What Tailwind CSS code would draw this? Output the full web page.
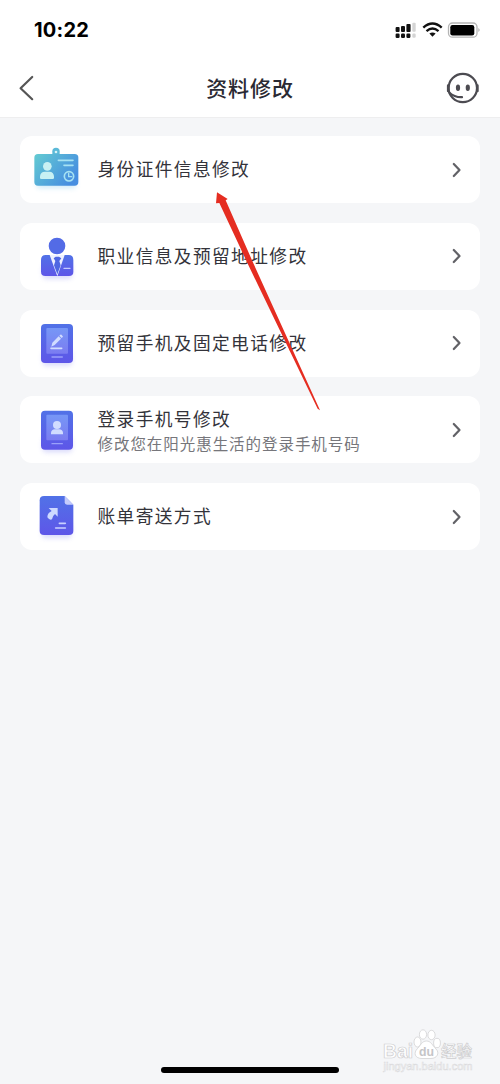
<!DOCTYPE html>
<html lang="zh-CN">
<head>
<meta charset="utf-8">
<title>资料修改</title>
<script src="https://cdn.jsdelivr.net/npm/@tailwindcss/browser@4"></script>
</head>
<body class="font-['Noto_Sans_CJK_SC',sans-serif]">
<div class="relative flex h-[1084px] w-[500px] flex-col overflow-hidden bg-[#f5f6f8]">
  <header class="flex h-[118px] flex-col border-b border-[#eeeeef] bg-white">
    <div class="flex h-[60px] items-center justify-between pl-[34px] pr-[19px]">
      <span class="font-['Inter',sans-serif] text-[20px] leading-none font-bold tracking-[0.2px] text-black">10:22</span>
      <svg class="h-[20px] w-[86px]" viewBox="0 0 86 20">
        <g fill="#111"><rect x=".6" y="7" width="4" height="5" rx="1"/><rect x="6" y="6" width="4" height="6" rx="1"/><rect x="11.400" y="4" width="4.200" height="8" rx="1"/><rect x=".6" y="13.600" width="4" height="4.400" rx="1.200"/><rect x="6" y="13.600" width="4" height="4.400" rx="1.200"/><rect x="11.400" y="13.600" width="4" height="4.400" rx="1.200"/></g>
        <g fill="#d4d4d4"><rect x="17.300" y="2.800" width="3.400" height="9" rx="1"/><rect x="17.300" y="13.600" width="3.400" height="4.200" rx="1.200"/></g>
        <g fill="none" stroke="#111" stroke-width="2.400"><path d="M28.300 7.600Q37.500 -.6 46.700 7.600"/><path d="M31.500 11.100Q37.500 6 43.500 11.100"/></g>
        <path d="M34.400 13.600Q37.500 11.400 40.600 13.600L37.500 16.700Z" fill="#111"/>
        <rect x="53.500" y="3" width="28.500" height="14.200" rx="4" fill="#fff" stroke="#b5b5b5" stroke-width="1.300"/>
        <rect x="55.300" y="5" width="24" height="10.400" rx="2.200" fill="#000"/>
        <path d="M83.500 8Q85.500 10 83.500 12Z" fill="#999"/>
      </svg>
    </div>
    <div class="flex h-[56px] items-center justify-between pr-[20px] pl-[18px]">
      <svg class="h-[28px] w-[35px]" viewBox="0 0 35 28" fill="none" stroke="#555" stroke-width="2.200" stroke-linecap="round" stroke-linejoin="round"><path d="M14.200 3L2.600 14.200L14.200 25.200"/></svg>
      <h1 class="mb-[2px] ml-[2px] text-[21px] leading-none font-medium tracking-[0.900px] text-[#2a2a33]">资料修改</h1>
      <svg class="h-[34px] w-[35px]" viewBox="0 0 35 34" fill="none" stroke="#4c4b51" stroke-width="2.200" stroke-linecap="round">
        <circle cx="17.800" cy="17" r="14.200"/><path d="M3.200 14.500V20M32.400 14.500V20" stroke-width="2.600"/><path d="M4.200 21.500Q9.500 26.500 17 26.200"/>
        <g fill="#4c4b51" stroke="none"><ellipse cx="13" cy="16.800" rx="2.100" ry="3.200"/><ellipse cx="22.800" cy="16.800" rx="2.100" ry="3.200"/></g>
      </svg>
    </div>
  </header>

  <svg class="absolute h-0 w-0">
    <defs>
      <linearGradient id="teal" x1="0" y1="0" x2="1" y2=".6"><stop stop-color="#63cbd2"/><stop offset="1" stop-color="#478ee0"/></linearGradient>
      <linearGradient id="violet" x1="0" y1="0" x2="0" y2="1"><stop stop-color="#5172e7"/><stop offset="1" stop-color="#5e56e8"/></linearGradient>
      <linearGradient id="screen" x1="0" y1="0" x2="0" y2="1"><stop stop-color="#7697f6"/><stop offset="1" stop-color="#7b7cf1"/></linearGradient>
      <filter id="soft" x="-50%" y="-50%" width="200%" height="200%"><feGaussianBlur stdDeviation="8"/></filter>
    </defs>
  </svg>

  <main class="flex flex-col gap-[19.800px] px-[20px] pt-[18px]">
    <section class="flex h-[67px] items-center rounded-[12px] bg-white pr-[17.500px]">
      <svg class="h-[67px] w-[77.500px] shrink-0" viewBox="0 18 232.500 201">
        <g transform="translate(-20 0) translate(20 0)">
        <rect x="50" y="130" width="118" height="45" rx="10" fill="#6bbfe8" opacity=".3" filter="url(#soft)"/>
        <path d="M108 53a11 11 0 0 1 11 11V78H97V64a11 11 0 0 1 11-11Z" fill="#5bb9d8"/>
        <rect x="43" y="72" width="132" height="95" rx="11" fill="url(#teal)"/>
        <circle cx="108" cy="66" r="4" fill="#d8f2f7"/>
        <circle cx="82" cy="109" r="13" fill="#c8f1f3"/><path d="M60 144V139Q61 125 75 125H88Q101 125 102 139V144Q102 147 98 147H64Q60 147 60 144Z" fill="#c8f1f3"/>
        <g stroke="#a6e2f3" stroke-width="5" fill="none" stroke-linecap="round"><path d="M115 91H159M132 106H159"/><circle cx="147" cy="139" r="14"/><path d="M146 130V140H155" stroke-width="4"/></g>
        </g>
      </svg>
      <span class="mb-[1px] flex-1 text-[17.700px] leading-none tracking-[1.400px] text-[#33333a]">身份证件信息修改</span>
      <svg class="h-[18px] w-[12px]" viewBox="0 0 12 18" fill="none" stroke="#626267" stroke-width="2.200" stroke-linecap="round" stroke-linejoin="round"><path d="M2.800 3L8.500 9L2.800 15"/></svg>
    </section>

    <section class="flex h-[67px] items-center rounded-[12px] bg-white pr-[17.500px]">
      <svg class="h-[67px] w-[77.500px] shrink-0" viewBox="0 18 232.500 201">
        <rect x="68" y="140" width="88" height="45" rx="10" fill="#7a7cf0" opacity=".28" filter="url(#soft)"/>
        <circle cx="111" cy="87" r="25" fill="#536be6"/>
        <path d="M77 114H146Q160 114 160 129V164Q160 177 147 177H76Q63 177 63 164V129Q63 114 77 114Z" fill="url(#violet)"/>
        <path d="M89 114H134L112 178Z" fill="#eef1ff"/><path d="M101 124L107 119H117L124 124L118 132L122 145L112 172L102 145L106 132Z" fill="#4f67e2"/>
        <path d="M132 154H150" stroke="#c4cbff" stroke-width="4" stroke-linecap="round"/>
      </svg>
      <span class="mb-[1px] flex-1 text-[17.700px] leading-none tracking-[1.400px] text-[#33333a]">职业信息及预留地址修改</span>
      <svg class="h-[18px] w-[12px]" viewBox="0 0 12 18" fill="none" stroke="#626267" stroke-width="2.200" stroke-linecap="round" stroke-linejoin="round"><path d="M2.800 3L8.500 9L2.800 15"/></svg>
    </section>

    <section class="flex h-[67px] items-center rounded-[12px] bg-white pr-[17.500px]">
      <svg class="h-[67px] w-[77.500px] shrink-0" viewBox="0 18 232.500 201">
        <rect x="68" y="140" width="88" height="45" rx="10" fill="#7a7cf0" opacity=".28" filter="url(#soft)"/>
        <rect x="63" y="60" width="96" height="117" rx="12" fill="url(#violet)"/><rect x="79" y="72" width="65" height="77" rx="3" fill="url(#screen)"/>
        <path d="M93 133H125" stroke="#d1dcff" stroke-width="5" stroke-linecap="round"/><path d="M94 128L97 116L116 97L123 104L104 123ZM118 95L121 92Q124 91 127 95L129 98L125 102Z" fill="#d1dcff"/>
        <path d="M96 159H127" stroke="#9aa0fa" stroke-width="4" stroke-linecap="round"/>
      </svg>
      <span class="flex-1 text-[17.700px] leading-none tracking-[1.400px] text-[#33333a]">预留手机及固定电话修改</span>
      <svg class="h-[18px] w-[12px]" viewBox="0 0 12 18" fill="none" stroke="#626267" stroke-width="2.200" stroke-linecap="round" stroke-linejoin="round"><path d="M2.800 3L8.500 9L2.800 15"/></svg>
    </section>

    <section class="flex h-[67px] items-center rounded-[12px] bg-white pr-[17.500px]">
      <svg class="h-[67px] w-[77.500px] shrink-0" viewBox="0 19 232.500 201">
        <rect x="68" y="143" width="88" height="45" rx="10" fill="#7a7cf0" opacity=".28" filter="url(#soft)"/>
        <rect x="63" y="63" width="96" height="117" rx="12" fill="url(#violet)"/><rect x="79" y="75" width="65" height="77" rx="3" fill="url(#screen)"/>
        <circle cx="111" cy="106" r="12" fill="#d1dcff"/><path d="M93 134V130Q94 119 105 119H117Q128 119 129 130V134Z" fill="#d1dcff"/>
        <path d="M96 162H127" stroke="#9aa0fa" stroke-width="4" stroke-linecap="round"/>
      </svg>
      <div class="flex flex-1 flex-col gap-[8px] pt-[2px]">
        <span class="text-[17.700px] leading-none tracking-[1.400px] text-[#33333a]">登录手机号修改</span>
        <span class="text-[15.500px] leading-none tracking-[0.950px] text-[#76767b]">修改您在阳光惠生活的登录手机号码</span>
      </div>
      <svg class="h-[18px] w-[12px]" viewBox="0 0 12 18" fill="none" stroke="#626267" stroke-width="2.200" stroke-linecap="round" stroke-linejoin="round"><path d="M2.800 3L8.500 9L2.800 15"/></svg>
    </section>

    <section class="flex h-[67px] items-center rounded-[12px] bg-white pr-[17.500px]">
      <svg class="h-[67px] w-[77.500px] shrink-0" viewBox="0 18 232.500 201">
        <rect x="66" y="138" width="88" height="45" rx="10" fill="#7a7cf0" opacity=".28" filter="url(#soft)"/>
        <path d="M72 57H134L160 83V161Q160 174 147 174H72Q59 174 59 161V70Q59 57 72 57Z" fill="url(#violet)"/>
        <path d="M134 57L160 83H141Q134 83 134 76Z" fill="#c5ccfc"/>
        <path d="M86 93H113V119L105 111Q96 118 96 127Q89 131 82 121Q82 108 95 102Z" fill="#cdd9ff"/>
        <path d="M118 139H136M107 153H136" stroke="#c9d1ff" stroke-width="5" stroke-linecap="round"/>
      </svg>
      <span class="mb-[1px] flex-1 text-[17.700px] leading-none tracking-[1.400px] text-[#33333a]">账单寄送方式</span>
      <svg class="h-[18px] w-[12px]" viewBox="0 0 12 18" fill="none" stroke="#626267" stroke-width="2.200" stroke-linecap="round" stroke-linejoin="round"><path d="M2.800 3L8.500 9L2.800 15"/></svg>
    </section>
  </main>

  <svg class="absolute top-[180px] left-[200px] h-[240px] w-[140px]" viewBox="0 0 420 720"><path d="M51 37L83 57L77 61L157 243L360 691L353 686L145 255L58 69L48 70Z" fill="#e52d21"/></svg>

  <svg class="absolute top-[1020px] left-[370px] h-[64px] w-[130px]" viewBox="0 0 130 64">
    <g fill="#fff" stroke="#cdcdcf" stroke-width=".7">
      <text x="13" y="38" font-family="Liberation Sans" font-weight="700" font-size="20" textLength="30" lengthAdjust="spacingAndGlyphs">Bai</text>
      <ellipse cx="47.500" cy="22" rx="3.500" ry="5"/><ellipse cx="53" cy="14.500" rx="3.600" ry="4.700"/><ellipse cx="61.500" cy="15" rx="3.600" ry="4.700"/><ellipse cx="67" cy="23" rx="3.400" ry="4.700"/>
      <path d="M56.500 21C61 21 62 25 66 29C70 33 67 38.500 61 38.500H52C45 38.500 43 33 47.500 28.500C51 25 52 21 56.500 21Z"/>
      <text x="71" y="36.500" font-family="Noto Sans CJK SC" font-weight="500" font-size="15.500" textLength="31" lengthAdjust="spacingAndGlyphs">经验</text>
    </g>
    <text x="49" y="36" font-family="Liberation Sans" font-weight="700" font-size="13" fill="#c5c5c7" textLength="15" lengthAdjust="spacingAndGlyphs">du</text>
    <text x="13.500" y="50" font-family="Liberation Sans" font-size="10" fill="#fff" stroke="#dadadc" stroke-width=".5" textLength="89" lengthAdjust="spacingAndGlyphs">jingyan.baidu.com</text>
  </svg>
  <div class="absolute bottom-[11px] left-[161px] h-[6px] w-[178px] rounded-full bg-black"></div>
</div>
</body>
</html>
